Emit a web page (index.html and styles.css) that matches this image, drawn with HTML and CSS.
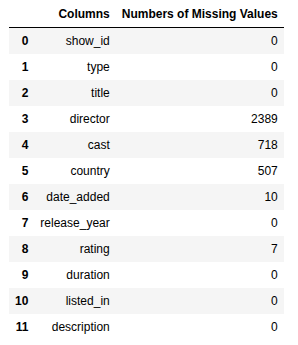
FILE: index.html
```html
<!DOCTYPE html>
<html>
<head>
<meta charset="utf-8">
<link rel="stylesheet" href="styles.css">
</head>
<body>
<table class="dataframe">
<thead>
<tr><th></th><th>Columns</th><th>Numbers of Missing Values</th></tr>
</thead>
<tbody>
<tr><th>0</th><td>show_id</td><td>0</td></tr>
<tr><th>1</th><td>type</td><td>0</td></tr>
<tr><th>2</th><td>title</td><td>0</td></tr>
<tr><th>3</th><td>director</td><td>2389</td></tr>
<tr><th>4</th><td>cast</td><td>718</td></tr>
<tr><th>5</th><td>country</td><td>507</td></tr>
<tr><th>6</th><td>date_added</td><td>10</td></tr>
<tr><th>7</th><td>release_year</td><td>0</td></tr>
<tr><th>8</th><td>rating</td><td>7</td></tr>
<tr><th>9</th><td>duration</td><td>0</td></tr>
<tr><th>10</th><td>listed_in</td><td>0</td></tr>
<tr><th>11</th><td>description</td><td>0</td></tr>
</tbody>
</table>
</body>
</html>
```
FILE: styles.css
```css
html, body {
  margin: 0;
  background: #fff;
}
body {
  padding: 1px 0 0 9px;
  font-family: "Liberation Sans", Arial, sans-serif;
  color: #000;
}
.dataframe {
  border: none;
  border-collapse: collapse;
  border-spacing: 0;
  font-size: 12px;
  table-layout: auto;
}
.dataframe th,
.dataframe td {
  text-align: right;
  vertical-align: middle;
  padding: 6px;
  line-height: normal;
  white-space: nowrap;
  border: none;
}
.dataframe th {
  font-weight: bold;
}
.dataframe thead {
  border-bottom: 1px solid #000;
}
.dataframe tbody tr:nth-child(odd) {
  background: #f5f5f5;
}
```
